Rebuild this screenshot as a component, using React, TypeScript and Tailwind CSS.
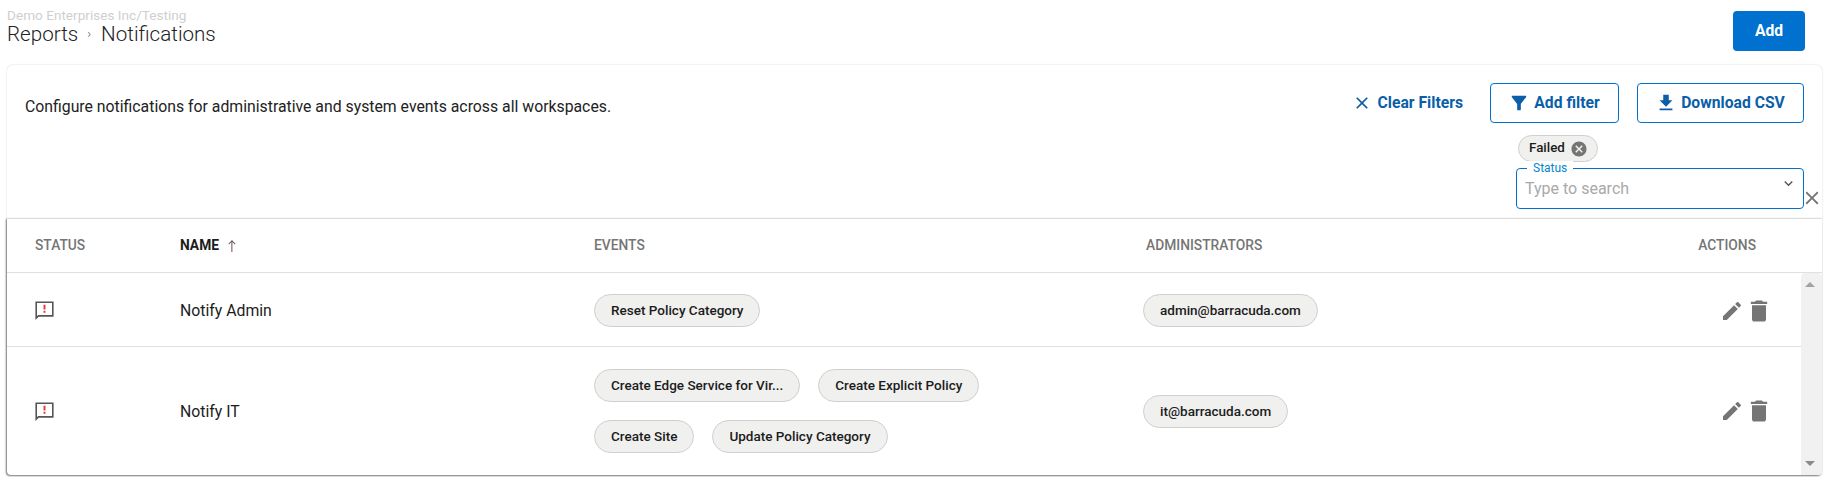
const P = {
  clear: "M19 6.41 17.59 5 12 10.59 6.41 5 5 6.41 10.59 12 5 17.59 6.41 19 12 13.41 17.59 19 19 17.59 13.41 12z",
  filter: "M4.25 5.61C6.27 8.2 10 13 10 13v6c0 .55.45 1 1 1h2c.55 0 1-.45 1-1v-6s3.72-4.8 5.74-7.39c.51-.66.04-1.61-.79-1.61H5.04c-.83 0-1.3.95-.79 1.61z",
  download: "M19 9h-4V3H9v6H5l7 7 7-7zM5 18v2h14v-2H5z",
  edit: "M3 17.25V21h3.75L17.81 9.94l-3.75-3.75L3 17.25zM20.71 7.04c.39-.39.39-1.02 0-1.41l-2.34-2.34a.9959.9959 0 0 0-1.41 0l-1.83 1.83 3.75 3.75 1.83-1.83z",
  trash: "M6 19c0 1.1.9 2 2 2h8c1.1 0 2-.9 2-2V7H6v12zM19 4h-3.5l-1-1h-5l-1 1H5v2h14V4z",
  cancel: "M12 2C6.47 2 2 6.47 2 12s4.47 10 10 10 10-4.47 10-10S17.53 2 12 2zm5 13.59L15.59 17 12 13.41 8.41 17 7 15.59 10.59 12 7 8.41 8.41 7 12 10.59 15.59 7 17 8.41 13.41 12 17 15.59z",
  up: "M11 21h1.6V6l3.6 3.6 1-1L12 3 6.6 8.6l1 1L11 6z",
  chev: "M16.59 8.59 12 13.17 7.41 8.59 6 10l6 6 6-6z",
};

function Icon({ d, className }: { d: string; className?: string }) {
  return (
    <svg viewBox="0 0 24 24" fill="currentColor" className={className}>
      <path d={d} />
    </svg>
  );
}

function AlertIcon() {
  return (
    <svg viewBox="0 0 24 24" className="w-[23px] h-[23px] -ml-[2px]">
      <path fill="#555555" fillRule="evenodd" d="M2.5 2.5h19v16H6l-3.5 3.5zM4.2 4.2v13.6l1.3-1H19.8V4.2z" />
      <path fill="#e53935" d="M11 6h2v5h-2zM11 12.3h2v2h-2z" />
    </svg>
  );
}

function Chip({ children }: { children: React.ReactNode }) {
  return (
    <span className="inline-flex items-center h-[33px] px-4 rounded-full bg-[#f0f0ef] border border-[#cfcfcf] text-[13.5px] font-medium text-[#1c1c1c] whitespace-nowrap">
      {children}
    </span>
  );
}

function OutlineButton({ d, label, w, iconClass }: { d: string; label: string; w: string; iconClass: string }) {
  return (
    <button className={`flex items-center justify-center gap-[4px] h-[40px] pr-[1px] rounded border border-[#0071ce] text-[#0a5fa8] text-[15.7px] font-bold ${w}`}>
      <Icon d={d} className={iconClass} />
      {label}
    </button>
  );
}

function Actions() {
  return (
    <div className="flex items-center justify-end gap-[1px] pr-[28px] text-[#757575]">
      <Icon d={P.edit} className="w-6 h-6" />
      <Icon d={P.trash} className="w-7 h-7" />
    </div>
  );
}

const cols = "grid grid-cols-[145px_414px_552px_1fr] pl-[28px]";

export default function App() {
  return (
    <div className="w-[1825px] h-[477px] overflow-hidden bg-white font-['Roboto',sans-serif] text-[#1c1c1c]">
      <header className="h-[65px] flex justify-between pl-[7px] pr-5 pt-[9px]">
        <div>
          <div className="text-[13.6px] leading-[12px] text-[#cfcfcf]">Demo Enterprises Inc/Testing</div>
          <div className="text-[20.6px] leading-[24px] font-light text-[#222] flex items-center mt-[1px]">
            Reports<span className="text-[13px] ml-[9px] mr-[10px] text-[#555]">›</span>Notifications
          </div>
        </div>
        <button className="w-[72px] h-[40px] mt-[2px] rounded bg-[#0071ce] text-white text-[15.7px] font-bold">Add</button>
      </header>

      <main className="ml-[7px] mr-[3px] h-[410px] rounded-t-md rounded-b bg-white shadow-[0_0_2px_rgba(0,0,0,0.18)] flex flex-col">
        <section className="h-[153px] flex justify-between pl-[18px] pr-[18px] pt-[22px]">
          <p className="text-[15.8px] leading-[40px] text-[#222]">
            Configure notifications for administrative and system events across all workspaces.
          </p>
          <div className="w-[460px] -mt-[4px] flex flex-col items-end">
            <div className="flex items-center">
              <button className="flex items-center gap-[6px] mr-[27px] text-[#0a5fa8] text-[15.7px] font-bold">
                <Icon d={P.clear} className="w-5 h-5" />
                Clear Filters
              </button>
              <OutlineButton d={P.filter} label="Add filter" w="w-[129px] mr-[18px]" iconClass="w-[22px] h-[22px]" />
              <OutlineButton d={P.download} label="Download CSV" w="w-[167px]" iconClass="w-[22px] h-[22px]" />
            </div>
            <div className="w-[288px] mt-[11px]">
              <span className="ml-[2px] mt-[1px] inline-flex items-center gap-[5px] h-[27px] pl-[10px] pr-[9px] rounded-full bg-[#f0f0ef] border border-[#cfcfcf] text-[13.4px] text-[#1c1c1c] font-medium">
                Failed
                <Icon d={P.cancel} className="w-[18px] h-[18px] text-[#757575]" />
              </span>
              <div className="relative mt-[6px] h-[41px] rounded border border-[#0071ce] flex items-center pl-[8px] pr-[6px] justify-between">
                <span className="absolute -top-[8px] left-[10px] px-[6px] bg-white text-[12px] leading-[14px] text-[#0088ce]">Status</span>
                <span className="text-[16px] text-[#a9a9a9]">Type to search</span>
                <Icon d={P.chev} className="w-[17px] h-[17px] text-[#555] -mt-[11px]" />
                <Icon d={P.clear} className="absolute -right-[20px] top-[18px] w-[22px] h-[22px] text-[#757575]" />
              </div>
            </div>
          </div>
        </section>

        <section className="flex-1 rounded-b shadow-[-1px_1px_2px_rgba(0,0,0,0.5)] border-t border-[#dcdcdc] flex flex-col overflow-hidden">
          <div className={`${cols} h-[54px] items-center border-b border-[#e0e0e0] text-[13.8px] font-medium text-[#757575]`}>
            <div>STATUS</div>
            <div className="flex items-center gap-[5px] text-[#1c1c1c] font-bold">
              NAME
              <Icon d={P.up} className="w-[16px] h-[16px] text-[#6b5b6b]" />
            </div>
            <div>EVENTS</div>
            <div className="flex justify-between pr-[66px]">
              <span>ADMINISTRATORS</span>
              <span>ACTIONS</span>
            </div>
          </div>

          <div className="flex-1 flex min-h-0">
            <div className="flex-1 flex flex-col">
              <div className={`${cols} h-[74px] pt-[2px] items-center border-b border-[#e0e0e0] text-[15.8px]`}>
                <AlertIcon />
                <div className="pt-[1px]">Notify Admin</div>
                <div><Chip>Reset Policy Category</Chip></div>
                <div className="grid grid-cols-[1fr_auto] items-center -ml-[3px]">
                  <div><Chip>admin@barracuda.com</Chip></div>
                  <Actions />
                </div>
              </div>
              <div className={`${cols} flex-1 items-center text-[15.8px]`}>
                <AlertIcon />
                <div className="pt-[1px]">Notify IT</div>
                <div className="flex flex-wrap gap-x-[18px] gap-y-[18px] w-[420px]">
                  <Chip>Create Edge Service for Vir...</Chip>
                  <Chip>Create Explicit Policy</Chip>
                  <Chip>Create Site</Chip>
                  <Chip>Update Policy Category</Chip>
                </div>
                <div className="grid grid-cols-[1fr_auto] items-center -ml-[3px]">
                  <div><Chip>it@barracuda.com</Chip></div>
                  <Actions />
                </div>
              </div>
            </div>
            <div className="w-[21px] bg-[#f1f1f1] rounded-t flex flex-col justify-between items-center py-[9px] pr-[4px]">
              <div className="w-0 h-0 border-x-[5px] border-x-transparent border-b-[5px] border-b-[#a3a3a3]" />
              <div className="w-0 h-0 border-x-[5px] border-x-transparent border-t-[5px] border-t-[#8a8a8a]" />
            </div>
          </div>
        </section>
      </main>
    </div>
  );
}
